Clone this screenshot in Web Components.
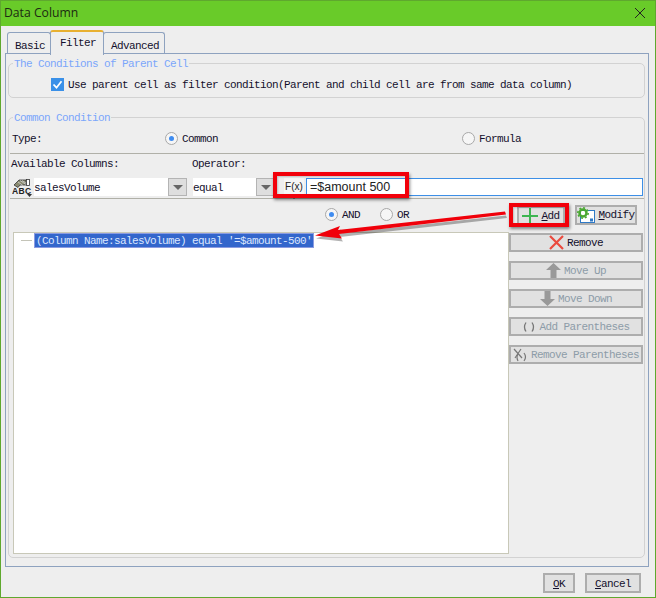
<!doctype html>
<html><head><meta charset="utf-8">
<style>
html,body{margin:0;padding:0;background:#eee;}
body{font:11px/12px "Liberation Mono",monospace;letter-spacing:-.6px;color:#14102c;}
</style></head>
<body>
<data-dialog heading="Data Column">
  <tab-strip slot="tabs"></tab-strip>
  <cond-group legend="The Conditions of Parent Cell" style="height:42px">
    <check-box style="margin:8px 0 0 42px">Use parent cell as filter condition(Parent and child cell are from same data column)</check-box>
  </cond-group>
  <filter-form></filter-form>
  <ui-button slot="foot" style="width:32px;height:20px;padding-top:2px" u="O">K</ui-button>
  <ui-button slot="foot" style="width:56px;height:20px;padding-top:2px;margin:0 8px 0 10px" u="C">ancel</ui-button>
</data-dialog>
<script>
const DISABLED='#8d9ca8';
class DataDialog extends HTMLElement{
constructor(){
  super();
  this.attachShadow({mode:'open'}).innerHTML=`<style>
:host{display:flex;flex-direction:column;position:relative;box-sizing:border-box;width:656px;height:598px;background:#eee;border:solid #5fa82e;border-width:0 1px 1px 1px;overflow:hidden;}
.title{display:flex;align-items:center;justify-content:space-between;box-sizing:border-box;height:26px;margin:0 -1px;padding:0 9px 2px 4px;background:#69cb29;border-top:1px solid #5fa82e;font:12.2px "Open Sans",sans-serif;letter-spacing:0;color:#1c2a12;}
.body{flex:none;margin:4px 6px 0 4px;}
.panel{box-sizing:border-box;height:514px;border:1px solid #8ea2bf;border-right-width:1px;padding:2px 3px 0 2px;position:relative;margin-top:-1px;}
.foot{display:flex;justify-content:flex-end;margin:6px 0 0;}
</style>
<div class="title"><span></span><svg width="14" height="14" viewBox="0 0 14 14"><path d="M2 2l10 10M12 2L2 12" stroke="#222" stroke-width="1" fill="none"/></svg></div>
<div class="body"><slot name="tabs"></slot><div class="panel"><slot></slot></div><div class="foot"><slot name="foot"></slot></div></div>
<red-marks></red-marks>`;
}
connectedCallback(){
  this.shadowRoot.querySelector('.title span').textContent=this.getAttribute('heading');
}
}
class TabStrip extends HTMLElement{
constructor(){
  super();
  this.attachShadow({mode:'open'}).innerHTML=`<style>
:host{display:flex;align-items:flex-end;height:24px;padding-left:3px;position:relative;z-index:1;}
div{box-sizing:border-box;border:1px solid #8ea2bf;border-bottom:0;border-radius:3px 3px 0 0;height:22px;padding:7px 0 0 7px;margin-left:-1px;}
.on{background:#eee;border-top:2px solid #e8b030;padding:5px 0 0 9px;margin-bottom:-1px;height:25px;}
</style><div style="width:44px">Basic</div><div class="on" style="width:54px">Filter</div><div style="width:62px">Advanced</div>`;
}
}
class CondGroup extends HTMLElement{
constructor(){
  super();
  this.attachShadow({mode:'open'}).innerHTML=`<style>
:host{display:block;}
fieldset{margin:0;padding:0;box-sizing:border-box;height:100%;border:1px solid #d2d2d2;border-radius:5px;min-width:0;}
legend{padding:2px 1px 0;margin-left:4px;color:#7ba6fb;font:inherit;line-height:12px;}
</style><fieldset><legend></legend><slot></slot></fieldset>`;
}
connectedCallback(){
  this.shadowRoot.querySelector('legend').textContent=this.getAttribute('legend');
}
}
class CheckBox extends HTMLElement{
constructor(){
  super();
  this.attachShadow({mode:'open'}).innerHTML=`<style>
:host{display:flex;align-items:center;gap:4px;}
svg{flex:none;}
</style><svg width="13" height="13" viewBox="0 0 13 13"><rect width="13" height="13" fill="#3a90e8"/><path d="M2.5 6.5l3 3.2 5-6.5" stroke="#fff" stroke-width="1.8" fill="none"/></svg><span><slot></slot></span>`;
}
}
class RadioBox extends HTMLElement{
constructor(){
  super();
  this.attachShadow({mode:'open'}).innerHTML=`<style>
:host{display:inline-flex;align-items:center;gap:4px;}
i{box-sizing:border-box;width:13px;height:13px;flex:none;border:1px solid #a8a8a8;border-radius:50%;background:#f6f6f6;display:flex;align-items:center;justify-content:center;}
:host([on]) i::after{content:'';width:5px;height:5px;border-radius:50%;background:#3f8cf0;}
</style><i></i><span><slot></slot></span>`;
}
}
class ComboBox extends HTMLElement{
constructor(){
  super();
  this.attachShadow({mode:'open'}).innerHTML=`<style>
:host{display:flex;height:18px;box-sizing:border-box;background:#fff;}
span{flex:1;line-height:20px;}
b{flex:none;width:19px;background:#dedede;border:1px solid #b4b4b4;box-sizing:border-box;display:flex;align-items:center;justify-content:center;}
b::after{content:'';border:solid transparent;border-width:5px 5px 0;border-top-color:#666;}
</style><span><slot></slot></span><b></b>`;
}
}
class UiButton extends HTMLElement{
constructor(){
  super();
  this.attachShadow({mode:'open'}).innerHTML=`<style>
:host{display:flex;align-items:center;justify-content:center;gap:3px;box-sizing:border-box;background:#e1e1e1;border:2px solid #adadad;white-space:nowrap;}
:host([disabled]){color:${DISABLED};}
u{text-underline-offset:1px;}
</style><slot name="icon"></slot><span><u></u><slot></slot></span>`;
}
connectedCallback(){
  this.shadowRoot.querySelector('u').textContent=this.getAttribute('u')||'';
}
}
class FilterForm extends HTMLElement{
constructor(){
  super();
  this.attachShadow({mode:'open'}).innerHTML=`<style>
:host{display:block;margin-top:12px;}
cond-group{height:448px;}
.rule{height:1px;background:#b0b0a8;margin:0 0 0 1px;}
.type{display:flex;align-items:center;height:29px;padding:0 0 0 3px;}
.type span{width:153px;}
.type radio-box:nth-of-type(1){width:297px;}
.labels{display:flex;box-sizing:border-box;height:24px;padding:4px 0 0 2px;}
.labels span:first-child{width:181px;}
.fields{display:flex;height:20px;align-items:flex-start;padding-left:3px;}
.field{box-sizing:border-box;flex:none;width:337px;height:18px;background:#fff;border:1px solid #3d8fe6;font:12.5px/16px "Liberation Sans",sans-serif;letter-spacing:0;padding-left:3px;color:#222;}
.fx{width:20px;height:18px;margin:0 2px 0 9px;background:#f6f6f6;font:10px/17px "Liberation Sans",sans-serif;letter-spacing:0;color:#222;text-align:center;position:relative;}
.fx::after{content:'';position:absolute;left:7px;bottom:-3px;border:solid transparent;border-width:4px 3px 0;border-top-color:#222;}
.logic{display:flex;align-items:center;height:33px;}
.logic radio-box{margin-bottom:2px;}
.logic radio-box:nth-child(1){margin-left:316px;width:55px;}
.logic radio-box:nth-child(2){width:137px;}
.logic .add{width:48px;height:20px;}
.logic .mod{width:62px;height:20px;margin:0 0 2px 10px;}
.main{display:flex;padding-left:4px;height:321px;margin-top:1px;}
.tree{box-sizing:border-box;flex:none;width:496px;margin-top:-1px;background:#fff;border:1px solid #c8c8b8;display:flex;align-items:flex-start;}
.tree i{width:11px;height:1px;background:#c4c4b8;margin:7px 2px 0 7px;flex:none;}
.sel{background:#3366cc;color:#dbe6ff;border:1px solid #8b9be0;height:15px;line-height:14px;box-sizing:border-box;padding:0 1px;}
.btns{display:flex;flex-direction:column;gap:9px;width:134px;}
.btns ui-button{height:19px;}
svg{display:block;flex:none;}
</style>
<cond-group legend="Common Condition">
  <div class="type"><span>Type:</span><radio-box on>Common</radio-box><radio-box>Formula</radio-box></div>
  <div class="rule"></div>
  <div class="labels"><span>Available Columns:</span><span>Operator:</span></div>
  <div class="fields">
    <svg width="20" height="20" viewBox="0 0 20 20" style="margin-right:2px"><path d="M2 7l5-5h7v5H8L6 9.500z" fill="#8a8a70" stroke="#333" stroke-width=".8"/><path d="M8 2.500l6 4M10 2.500l4 2.600M6 4l5 3.500" stroke="#ddd" stroke-width=".7"/><rect x="14.500" y="1.500" width="3" height="6" fill="#fff" stroke="#333" stroke-width=".8"/><text x="0" y="16" font-family="Liberation Sans" font-size="8.500" font-weight="700" fill="#222" letter-spacing=".3">ABC</text><path d="M15 16h5l-2.500 3z" fill="#333"/></svg>
    <combo-box style="width:153px">salesVolume</combo-box>
    <combo-box style="width:82px;margin-left:6px">equal</combo-box>
    <div class="fx">F(x)</div>
    <div class="field">=$amount 500</div>
  </div>
  <div class="rule"></div>
  <div class="logic">
    <radio-box on>AND</radio-box><radio-box>OR</radio-box>
    <ui-button class="add" u="A">dd
      <svg slot="icon" width="16" height="16" viewBox="0 0 16 16"><path d="M8 0v16M0 8h16" stroke="#3cb550" stroke-width="2"/></svg>
    </ui-button>
    <ui-button class="mod" u="M">odify
      <svg slot="icon" width="18" height="16" viewBox="0 0 18 16"><rect x="3.500" y="3.500" width="14" height="12" fill="#fff" stroke="#2f79c6"/><circle cx="6" cy="6" r="3.500" fill="none" stroke="#4aa832" stroke-width="2.500"/><circle cx="6" cy="6" r="5.200" fill="none" stroke="#4aa832" stroke-width="1.500" stroke-dasharray="2 2"/><rect x="13" y="11.500" width="3" height="3" fill="#2f79c6"/></svg>
    </ui-button>
  </div>
  <div class="main">
    <div class="tree"><i></i><div class="sel">(Column Name:salesVolume) equal '=$amount-500'</div></div>
    <div class="btns">
      <ui-button>Remove
        <svg slot="icon" width="15" height="15" viewBox="0 0 15 15"><path d="M1 1l13 13M14 1L1 14" stroke="#ea4a3e" stroke-width="2.200"/></svg>
      </ui-button>
      <ui-button disabled>Move Up
        <svg slot="icon" width="15" height="15" viewBox="0 0 15 15"><path d="M7.500 0L15 7h-4.500v8h-6V7H0z" fill="#999"/></svg>
      </ui-button>
      <ui-button disabled>Move Down
        <svg slot="icon" width="15" height="15" viewBox="0 0 15 15"><path d="M7.500 15L15 8h-4.500V0h-6v8H0z" fill="#999"/></svg>
      </ui-button>
      <ui-button disabled>Add Parentheses
        <svg slot="icon" width="14" height="12" viewBox="0 0 14 12"><path d="M4 1.500Q1 6 4 10.500M10 1.500Q13 6 10 10.500" stroke="#777" stroke-width="1.300" fill="none"/></svg>
      </ui-button>
      <ui-button disabled>Remove Parentheses
        <svg slot="icon" width="15" height="14" viewBox="0 0 15 14"><path d="M1 1l8 9M8 1L2 10" stroke="#777" stroke-width="1.200"/><path d="M11 5Q14 9 11 13" stroke="#777" stroke-width="1.200" fill="none"/><path d="M5 6Q3 9 5 13" stroke="#777" stroke-width="1.200" fill="none"/></svg>
      </ui-button>
    </div>
  </div>
</cond-group>`;
}
}
// the red callouts drawn on top of the screenshot
class RedMarks extends HTMLElement{
constructor(){
  super();
  this.attachShadow({mode:'open'}).innerHTML=`<style>
:host{position:absolute;left:-1px;top:0;width:656px;height:598px;pointer-events:none;z-index:5;}
div{position:absolute;box-sizing:border-box;border:solid #f2000a;box-shadow:1px 2px 3px rgba(0,0,0,.45),inset 1px 1px 2px rgba(0,0,0,.2);}
svg{position:absolute;left:0;top:0;}
</style>
<div style="left:273px;top:172px;width:136px;height:26px;border-width:4px"></div>
<div style="left:509px;top:203px;width:60px;height:24px;border-width:4px"></div>
<svg width="656" height="598"><path d="M505 213.500L338 231.500l2-4-25 9 27 3-3-4.500L506 216z" fill="#000" opacity=".3" transform="translate(1 2)"/><path d="M505 211.500L338 230l2-4-25 9.500 27 3-3-4.500L506 214.500z" fill="#f0000a"/></svg>`;
}
}
customElements.define('ui-button',UiButton);
customElements.define('cond-group',CondGroup);
customElements.define('check-box',CheckBox);
customElements.define('radio-box',RadioBox);
customElements.define('combo-box',ComboBox);
customElements.define('tab-strip',TabStrip);
customElements.define('filter-form',FilterForm);
customElements.define('red-marks',RedMarks);
customElements.define('data-dialog',DataDialog);
</script>
</body></html>
